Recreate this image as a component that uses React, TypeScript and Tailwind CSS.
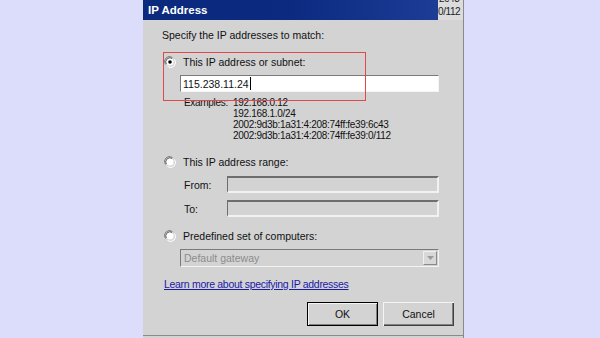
import { JSX } from "react";

function Radio({ checked }: { checked?: boolean }): JSX.Element {
  return (
    <svg width="12" height="12" viewBox="0 0 12 12" className="shrink-0">
      <path d="M1.5 8.5 A5 5 0 0 1 8.5 1.5" fill="none" stroke="#808080" strokeWidth="1" />
      <path d="M2.5 8 A4 4 0 0 1 8 2.5" fill="none" stroke="#404040" strokeWidth="1" />
      <circle cx="6" cy="6" r="3.6" fill="#ffffff" />
      <path d="M10.5 3.5 A5 5 0 0 1 3.5 10.5" fill="none" stroke="#ffffff" strokeWidth="1" />
      {checked && <circle cx="6" cy="6" r="1.8" fill="#000000" />}
    </svg>
  );
}

export default function App(): JSX.Element {
  const examples: string[] = [
    "192.168.0.12",
    "192.168.1.0/24",
    "2002:9d3b:1a31:4:208:74ff:fe39:6c43",
    "2002:9d3b:1a31:4:208:74ff:fe39:0/112",
  ];

  return (
    <div
      className="flex w-[600px] h-[338px] bg-[#dcdcfb] overflow-hidden text-[10.5px] text-[#111] leading-[12px]"
      style={{ fontFamily: '"Liberation Sans", Arial, sans-serif' }}
    >
      <div className="w-[143px] shrink-0" />

      {/* dialog */}
      <div className="relative w-[321px] h-[338px] bg-[#d3d3d3] border-r border-[#8a8a8a] shrink-0">
        {/* title bar */}
        <div className="flex h-[20px]">
          <div className="flex items-center w-[295px] bg-gradient-to-r from-[#0b2a7e] via-[#0b2a80] to-[#1c3c96] pl-[5px]">
            <span className="text-white font-bold text-[11.5px]">IP Address</span>
          </div>
          <div className="relative flex-1 bg-[#dcdcdc] overflow-hidden">
            <div className="absolute left-[1px] top-[-7px] text-[10px] tracking-[-0.3px] text-[#222]">2c43</div>
            <div className="absolute left-[0px] top-[6px] text-[10px] tracking-[-0.4px] text-[#222]">0/112</div>
          </div>
        </div>

        <div className="pl-[19px] pr-[24px]">
          <div className="mt-[9px] h-[12px]">Specify the IP addresses to match:</div>

          {/* option 1 */}
          <div className="mt-[15px] ml-[2px] flex items-center gap-[7px] h-[12px]">
            <Radio checked />
            <span>This IP address or subnet:</span>
          </div>
          <div className="mt-[7px] ml-[18px] h-[17px] bg-white border-t border-l border-[#7a7a7a] border-b border-r border-b-[#f4f4f4] border-r-[#f4f4f4] flex items-center pl-[2px] text-[10.5px]">
            <span>115.238.11.24</span>
            <span className="w-px h-[13px] bg-black ml-px" />
          </div>
          <div className="mt-[5px] ml-[22px] flex text-[10px] leading-[11px] tracking-[-0.3px]">
            <span className="w-[49px] shrink-0">Examples:</span>
            <div className="flex flex-col">
              {examples.map((e: string, i: number) => (
                <span key={i}>{e}</span>
              ))}
            </div>
          </div>

          {/* option 2 */}
          <div className="mt-[15px] ml-[2px] flex items-center gap-[7px] h-[12px]">
            <Radio />
            <span>This IP address range:</span>
          </div>
          <div className="mt-[8px] ml-[18px] flex items-center">
            <span className="w-[47px] pl-[4px]">From:</span>
            <div className="flex-1 h-[17px] bg-[#d3d3d3] border-t-2 border-l border-[#6e6e6e] border-b-2 border-r-2 border-b-[#f2f2f2] border-r-[#f2f2f2]" />
          </div>
          <div className="mt-[7px] ml-[18px] flex items-center">
            <span className="w-[47px] pl-[4px]">To:</span>
            <div className="flex-1 h-[17px] bg-[#d3d3d3] border-t-2 border-l border-[#6e6e6e] border-b-2 border-r-2 border-b-[#f2f2f2] border-r-[#f2f2f2]" />
          </div>

          {/* option 3 */}
          <div className="mt-[13px] ml-[2px] flex items-center gap-[7px] h-[12px]">
            <Radio />
            <span>Predefined set of computers:</span>
          </div>
          <div className="mt-[7px] ml-[18px] h-[18px] flex items-center border-t border-l border-[#7a7a7a] border-b border-r border-b-[#f4f4f4] border-r-[#f4f4f4] pl-[3px] pr-[1px]">
            <span className="flex-1 text-[#8c8c8c]">Default gateway</span>
            <div className="w-[14px] h-[14px] bg-[#d8d8d8] border border-[#f0f0f0] border-b-[#8a8a8a] border-r-[#8a8a8a] flex items-center justify-center">
              <svg width="7" height="4" viewBox="0 0 7 4">
                <path d="M0 0 H7 L3.5 4 Z" fill="#9a9a9a" />
              </svg>
            </div>
          </div>

          <div className="mt-[11px] ml-[2px] h-[12px] text-[10.5px] tracking-[-0.3px]">
            <span className="text-[#1a1aa6] underline">Learn more about specifying IP addresses</span>
          </div>

          {/* buttons */}
          <div className="mt-[12px] flex justify-end gap-[5px] mr-[-15px]">
            <div className="w-[71px] h-[24px] border border-black bg-[#d3d3d3] flex items-center justify-center shadow-[inset_1px_1px_0_#f4f4f4,inset_-1px_-1px_0_#808080]">
              OK
            </div>
            <div className="w-[71px] h-[24px] bg-[#d3d3d3] flex items-center justify-center shadow-[inset_1px_1px_0_#f4f4f4,inset_-1px_-1px_0_#404040,inset_-2px_-2px_0_#808080]">
              Cancel
            </div>
          </div>
        </div>

        <div className="absolute left-0 right-0 bottom-[2px] h-px bg-[#8a8a8a]" />

        {/* red highlight annotation */}
        <div className="absolute left-[20px] top-[52px] w-[203px] h-[49px] border border-[#e0484a]" />
      </div>

      <div className="flex-1" />
    </div>
  );
}
